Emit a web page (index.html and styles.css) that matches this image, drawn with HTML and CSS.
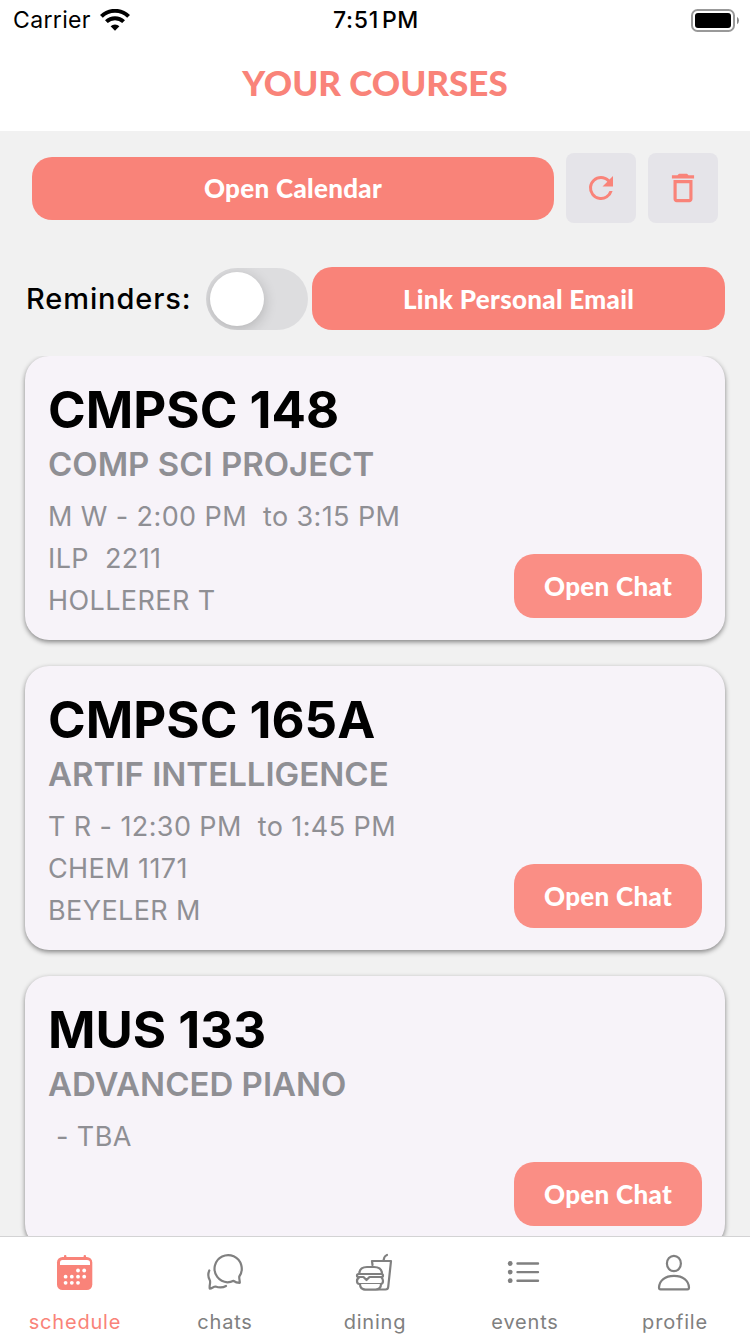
FILE: index.html
```html
<!DOCTYPE html>
<html lang="en">
<head>
<meta charset="utf-8">
<title>Your Courses</title>
<link rel="stylesheet" href="styles.css">
</head>
<body>
<div class="app">
  <header class="header">
    <div class="status">
      <div class="status-left">
        <span class="carrier">Carrier</span>
        <svg class="wifi" width="30" height="22" viewBox="0 0 30 22">
          <path d="M1.4 7.4 A19.4 19.4 0 0 1 28.6 7.4" fill="none" stroke="#000" stroke-width="4"/>
          <path d="M6.4 12.6 A12.4 12.4 0 0 1 23.6 12.6" fill="none" stroke="#000" stroke-width="4"/>
          <path d="M10.6 17.3 A6.2 6.2 0 0 1 19.4 17.3 L15 21.8 Z" fill="#000"/>
        </svg>
      </div>
      <span class="time">7:51<span class="meridiem">PM</span></span>
      <div class="status-right">
        <svg width="48" height="23" viewBox="0 0 48 23">
          <rect x="1" y="1" width="42" height="21" rx="5.5" fill="#fff" stroke="#999" stroke-width="2"/>
          <rect x="4" y="4" width="36" height="15" rx="3" fill="#000"/>
          <path d="M46 7.8 Q48 9.2 48 11.5 Q48 13.8 46 15.2 Z" fill="#888"/>
        </svg>
      </div>
    </div>
    <h1 class="title">YOUR COURSES</h1>
  </header>

  <section class="toolbar">
    <button class="btn btn-calendar">Open Calendar</button>
    <button class="icon-btn" aria-label="Refresh">
      <svg width="36" height="36" viewBox="0 0 24 24" fill="#f98379"><path d="M17.65 6.35A7.96 7.96 0 0 0 12 4a8 8 0 1 0 7.73 10h-2.08A6 6 0 1 1 12 6c1.66 0 3.14.69 4.22 1.78L13 11h7V4z"/></svg>
    </button>
    <button class="icon-btn" aria-label="Delete">
      <svg width="38" height="38" viewBox="0 0 24 24" fill="#f98379"><path d="M6 19c0 1.100.900 2 2 2h8c1.100 0 2-.900 2-2V7H6zM8 9h8v10H8zM15.500 4l-1-1h-5l-1 1H5v2h14V4z"/></svg>
    </button>
  </section>

  <section class="reminders">
    <span class="reminders-label">Reminders:</span>
    <span class="switch"><span class="knob"></span></span>
    <button class="btn btn-email">Link Personal Email</button>
  </section>

  <main class="courses">
    <article class="card">
      <div class="info">
        <h2 class="code code-a">CMPSC 148</h2>
        <h3 class="name name-a">COMP SCI PROJECT</h3>
        <p class="line">M W - 2:00 PM&nbsp; to 3:15 PM</p>
        <p class="line">ILP&nbsp; 2211</p>
        <p class="line">HOLLERER T</p>
      </div>
      <button class="btn btn-chat">Open Chat</button>
    </article>
    <article class="card">
      <div class="info">
        <h2 class="code code-b">CMPSC 165A</h2>
        <h3 class="name name-b">ARTIF INTELLIGENCE</h3>
        <p class="line">T R - 12:30 PM&nbsp; to 1:45 PM</p>
        <p class="line">CHEM 1171</p>
        <p class="line">BEYELER M</p>
      </div>
      <button class="btn btn-chat">Open Chat</button>
    </article>
    <article class="card card-short">
      <div class="info">
        <h2 class="code code-c">MUS 133</h2>
        <h3 class="name name-c">ADVANCED PIANO</h3>
        <p class="line">&nbsp;- TBA</p>
      </div>
      <button class="btn btn-chat">Open Chat</button>
    </article>
  </main>

  <nav class="tabs">
    <a class="tab active">
      <svg width="40" height="40" viewBox="0 0 40 40">
        <rect x="9" y="3" width="2.400" height="5" rx="1" fill="#f98379"/>
        <rect x="28.600" y="3" width="2.400" height="5" rx="1" fill="#f98379"/>
        <rect x="2" y="5" width="35.300" height="33" rx="5.500" fill="#f98379"/>
        <path d="M5 13 V10.500 Q5 8 7.500 8 H32 Q35 8 35 10.500 V13 Z" fill="#fff"/>
        <g fill="#fff"><circle cx="23" cy="18.500" r="1.900"/><circle cx="29.200" cy="18.500" r="1.900"/><circle cx="10.600" cy="24.700" r="1.900"/><circle cx="16.800" cy="24.700" r="1.900"/><circle cx="23" cy="24.700" r="1.900"/><circle cx="29.200" cy="24.700" r="1.900"/><circle cx="10.600" cy="30.800" r="1.900"/><circle cx="16.800" cy="30.800" r="1.900"/><circle cx="23" cy="30.800" r="1.900"/></g>
      </svg>
      <span class="tab-label">schedule</span>
    </a>
    <a class="tab">
      <svg width="40" height="40" viewBox="0 0 40 40" fill="none" stroke="#808080" stroke-width="2.200" stroke-linecap="round" stroke-linejoin="round">
        <path d="M34.300 24.500 A13.600 13.600 0 1 0 22.500 30.300 C25 30.300 27 29.600 28.600 28.800 C30 30 32.300 30.800 34.800 30.800 C34.800 28.500 34 26.500 34.300 24.500 Z"/>
        <path d="M4.300 18.500 C3 21.500 2.800 25 4.900 28.500 C5.800 30.500 4 34 4.800 36.700 C7 36.500 8.500 34.700 10.500 34.500 C14 35.800 18 35.700 21 34"/>
      </svg>
      <span class="tab-label">chats</span>
    </a>
    <a class="tab">
      <svg width="40" height="40" viewBox="0 0 40 40" fill="none" stroke="#808080" stroke-width="2.200" stroke-linecap="round" stroke-linejoin="round">
        <path d="M17.500 13 L17 9 H36 L33.200 35 Q33 37.500 30.500 37.500 H9"/>
        <path d="M28.500 8.500 L29.300 5.500 Q29.800 4 32 3"/>
        <path d="M4.300 22 Q4.300 15 12 15 H19 Q27 15 27 22 Z" fill="#fff"/>
        <path d="M3.500 22 H26.500 Q28 22 28 23.500 Q28 25 26.500 25 H14.500 L11.500 28 L8.500 25 H3.500 Q2 25 2 23.500 Q2 22 3.500 22 Z" fill="#fff"/>
        <path d="M4 25.500 Q2 27 2 29 Q2 32 4.500 32 H25.500 Q28 32 28 29 Q28 27 26.500 25.500"/>
        <path d="M5 32 Q5 37.500 10.500 37.500 H20.500 Q26 37.500 26 32" fill="#fff"/>
      </svg>
      <span class="tab-label">dining</span>
    </a>
    <a class="tab">
      <svg width="40" height="40" viewBox="0 0 40 40" stroke="#808080" fill="#808080">
        <g stroke="none"><circle cx="5.200" cy="11.500" r="2.400"/><circle cx="5.200" cy="20.100" r="2.400"/><circle cx="5.200" cy="28.700" r="2.400"/></g>
        <path d="M12.500 11.500 H33 M12.500 20.100 H33 M12.500 28.700 H33" stroke-width="2.400" stroke-linecap="round"/>
      </svg>
      <span class="tab-label">events</span>
    </a>
    <a class="tab">
      <svg width="40" height="40" viewBox="0 0 40 40" fill="none" stroke="#808080" stroke-width="2.200">
        <ellipse cx="18.900" cy="11.500" rx="7" ry="7.700"/>
        <path d="M5.500 37.300 Q4 37.300 4 35.500 C4.300 28.500 10 23.800 19 23.800 C28 23.800 33.700 28.500 34 35.500 Q34 37.300 32.500 37.300 Z"/>
      </svg>
      <span class="tab-label">profile</span>
    </a>
  </nav>
</div>
</body>
</html>
```
FILE: styles.css
```css
* { box-sizing: border-box; margin: 0; padding: 0; }
body {
  width: 750px;
  height: 1334px;
  overflow: hidden;
  background: #f1f1f1;
  font-family: Inter, "Liberation Sans", sans-serif;
  color: #000;
}
button { border: 0; }
.app { display: flex; flex-direction: column; height: 1334px; }

.header { height: 131px; background: #fff; flex: none; }
.status {
  display: grid;
  grid-template-columns: 1fr auto 1fr;
  align-items: center;
  height: 40px;
  padding: 0 11px 0 13px;
}
.status-left { display: flex; align-items: center; gap: 9px; }
.status-right { display: flex; justify-content: flex-end; }
.carrier { font-size: 23px; line-height: 40px; letter-spacing: 0.35px; }
.time { font-size: 23px; font-weight: 500; line-height: 40px; letter-spacing: 0.7px; }
.meridiem { margin-left: 3px; }
.title {
  font-family: Lato, "Liberation Sans", sans-serif;
  font-size: 35px;
  font-weight: 900;
  line-height: 44px;
  margin-top: 20px;
  text-align: center;
  color: #f98379;
}

.btn {
  display: flex;
  align-items: center;
  justify-content: center;
  height: 63px;
  border-radius: 20px;
  background: #f98379;
  color: #fff;
  font-family: Lato, "Liberation Sans", sans-serif;
  font-size: 26px;
  font-weight: 900;
  white-space: nowrap;
}
.toolbar {
  display: flex;
  align-items: center;
  gap: 12px;
  padding: 22px 32px 0;
  flex: none;
}
.btn-calendar { flex: 1; letter-spacing: 0.3px; }
.icon-btn {
  display: flex;
  align-items: center;
  justify-content: center;
  width: 70px;
  height: 70px;
  border-radius: 8px;
  background: #e5e4e9;
}
.reminders {
  display: flex;
  align-items: center;
  padding: 44px 25px 0 26px;
  flex: none;
}
.reminders-label { width: 180px; font-size: 29px; font-weight: 500; letter-spacing: 0.9px; }
.switch {
  width: 102px;
  height: 62px;
  padding: 4px;
  border-radius: 31px;
  background: #dddddf;
  overflow: hidden;
  flex: none;
}
.knob {
  display: block;
  width: 54px;
  height: 54px;
  border-radius: 50%;
  background: #fff;
  box-shadow: 0 3px 14px rgba(0, 0, 0, 0.2);
}
.btn-email { flex: 1; margin-left: 4px; letter-spacing: 0.3px; }

.courses {
  display: flex;
  flex-direction: column;
  gap: 26px;
  flex: 1;
  min-height: 0;
  margin-top: 26px;
  padding: 0 25px;
  overflow: hidden;
}
.card {
  display: flex;
  justify-content: space-between;
  align-items: flex-end;
  height: 284px;
  padding: 22px 23px;
  border-radius: 24px;
  background: #f7f3f9;
  box-shadow: 0 2px 5px rgba(0, 0, 0, 0.46);
  flex: none;
}
.card-short { height: 272px; }
.info { align-self: flex-start; white-space: nowrap; }
.code { font-size: 51px; font-weight: 700; line-height: 63px; }
.name {
  font-size: 33px;
  font-weight: 600;
  line-height: 46px;
  margin-bottom: 9px;
  color: #8f8f94;
}
.line { font-size: 27px; line-height: 42px; letter-spacing: 0.4px; color: #8f8f94; }
.btn-chat { width: 188px; height: 64px; background: #fa8e85; letter-spacing: 0.3px; }

.tabs {
  display: grid;
  grid-template-columns: repeat(5, 1fr);
  height: 98px;
  border-top: 1px solid #d3d3d4;
  background: #fff;
  flex: none;
}
.tab {
  display: flex;
  flex-direction: column;
  align-items: center;
  padding-top: 15px;
  color: #808080;
}
.tab-label { font-size: 20px; line-height: 28px; margin-top: 16px; letter-spacing: 0.8px; }
.active { color: #f98379; }
```
